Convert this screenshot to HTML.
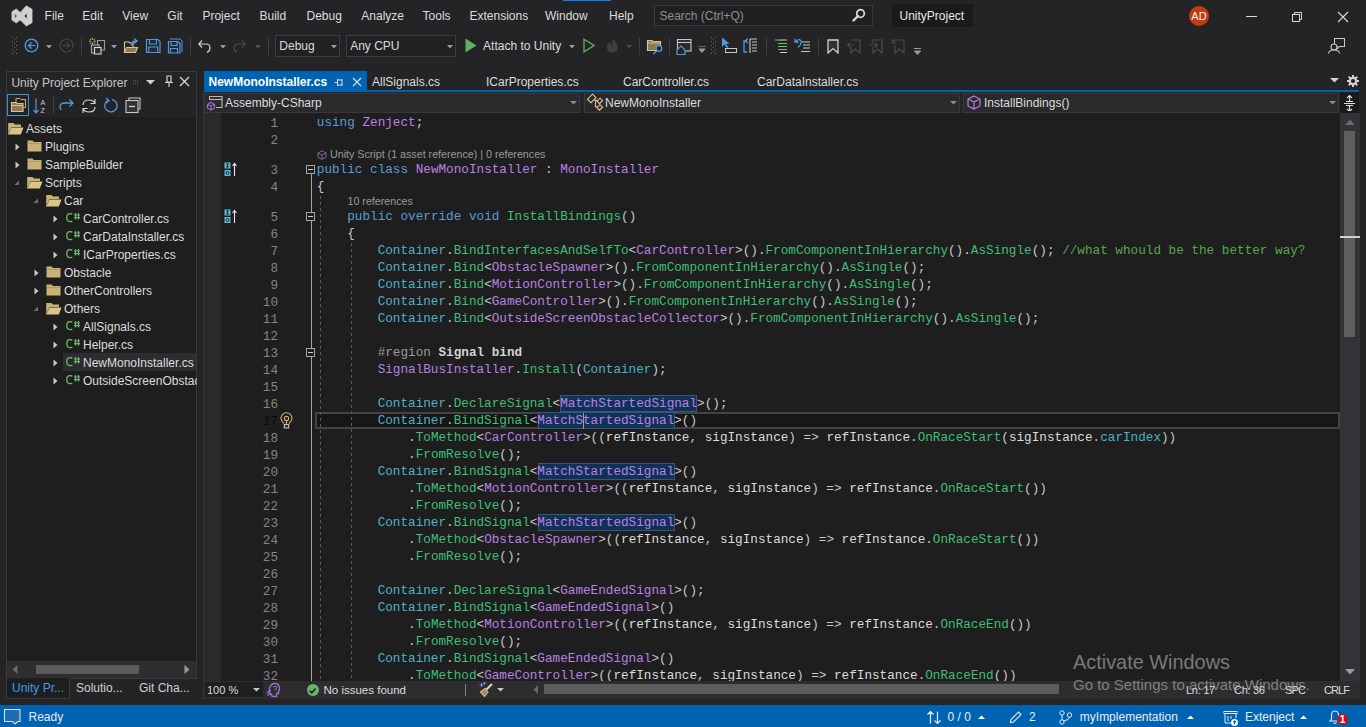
<!DOCTYPE html>
<html><head><meta charset="utf-8"><title>VS</title>
<style>
html,body{margin:0;padding:0;}
body{width:1366px;height:727px;overflow:hidden;position:relative;background:#242426;font-family:"Liberation Sans",sans-serif;}
body>div,body>svg{position:absolute;}
.ln{position:absolute;left:240px;width:38px;text-align:right;font-family:"Liberation Mono",monospace;font-size:12.68px;height:17px;line-height:17px;padding-top:1px;box-sizing:border-box;}
.code{position:absolute;left:316.8px;font-family:"Liberation Mono",monospace;font-size:12.68px;height:17px;line-height:17px;white-space:pre;}
</style></head><body>
<svg style="left:11px;top:5px;" width="22" height="22" viewBox="0 0 22 22"><path d="M5.2 3.9 L9.3 7.4 L15.3 0.85 L21.1 4.2 L21.1 17.7 L15.3 21.1 L9.3 15.1 L5.2 18 L0.85 15 L0.85 6.8 Z M3.9 8.8 L6.2 11 L3.9 13.2 Z M16 8.3 L13 11 L16 13.7 Z" fill="#d0d0d0" fill-rule="evenodd" stroke="#d0d0d0" stroke-width="0.6" stroke-linejoin="round"/></svg><div style="left:44.6px;top:6px;height:20px;line-height:20px;white-space:pre;font-size:12px;color:#dcdcdc;">File</div><div style="left:82.3px;top:6px;height:20px;line-height:20px;white-space:pre;font-size:12px;color:#dcdcdc;">Edit</div><div style="left:122.3px;top:6px;height:20px;line-height:20px;white-space:pre;font-size:12px;color:#dcdcdc;">View</div><div style="left:167.3px;top:6px;height:20px;line-height:20px;white-space:pre;font-size:12px;color:#dcdcdc;">Git</div><div style="left:202.4px;top:6px;height:20px;line-height:20px;white-space:pre;font-size:12px;color:#dcdcdc;">Project</div><div style="left:259.5px;top:6px;height:20px;line-height:20px;white-space:pre;font-size:12px;color:#dcdcdc;">Build</div><div style="left:306.5px;top:6px;height:20px;line-height:20px;white-space:pre;font-size:12px;color:#dcdcdc;">Debug</div><div style="left:361.3px;top:6px;height:20px;line-height:20px;white-space:pre;font-size:12px;color:#dcdcdc;">Analyze</div><div style="left:422.6px;top:6px;height:20px;line-height:20px;white-space:pre;font-size:12px;color:#dcdcdc;">Tools</div><div style="left:469.5px;top:6px;height:20px;line-height:20px;white-space:pre;font-size:12px;color:#dcdcdc;">Extensions</div><div style="left:545px;top:6px;height:20px;line-height:20px;white-space:pre;font-size:12px;color:#dcdcdc;">Window</div><div style="left:609px;top:6px;height:20px;line-height:20px;white-space:pre;font-size:12px;color:#dcdcdc;">Help</div><div style="left:563px;top:0px;width:48px;height:1px;background:#0a84f0;"></div><div style="left:654px;top:5px;width:219px;height:21px;background:#202022;border:1px solid #3a3a3c;box-sizing:border-box;"></div><div style="left:659.5px;top:7px;height:19px;line-height:19px;white-space:pre;font-size:12px;color:#8f8f8f;">Search (Ctrl+Q)</div><svg style="left:852px;top:8px;" width="14" height="14" viewBox="0 0 14 14"><circle cx="8.5" cy="5.5" r="3.8" fill="none" stroke="#d8d8d8" stroke-width="1.8"/><path d="M6 8 L1.5 12.5" stroke="#d8d8d8" stroke-width="2.4" stroke-linecap="round"/></svg><div style="left:892px;top:4px;width:81px;height:23px;background:#1a1a1a;"></div><div style="left:899.5px;top:6px;height:21px;line-height:21px;white-space:pre;font-size:12px;color:#e8e8e8;">UnityProject</div><div style="left:1189px;top:6px;width:20px;height:20px;border-radius:50%;background:#c13c0f;color:#f0f0f0;font-size:11px;line-height:20px;text-align:center;">AD</div><div style="left:1246px;top:16px;width:11px;height:1px;background:#d8d8d8;"></div><svg style="left:1291px;top:11px;" width="12" height="12" viewBox="0 0 12 12"><rect x="1.5" y="3.5" width="7" height="7" fill="none" stroke="#d8d8d8"/><path d="M3.5 3.5 V1.5 H10.5 V8.5 H8.5" fill="none" stroke="#d8d8d8"/></svg><svg style="left:1337px;top:11px;" width="12" height="12" viewBox="0 0 12 12"><path d="M1 1 L11 11 M11 1 L1 11" stroke="#d8d8d8" stroke-width="1.1"/></svg><svg style="left:12px;top:37px;" width="5" height="17" viewBox="0 0 5 17"><rect x="0" y="0" width="1" height="1" fill="#6a6a6a"/><rect x="4" y="0" width="1" height="1" fill="#6a6a6a"/><rect x="2" y="2" width="1" height="1" fill="#6a6a6a"/><rect x="0" y="4" width="1" height="1" fill="#6a6a6a"/><rect x="4" y="4" width="1" height="1" fill="#6a6a6a"/><rect x="2" y="6" width="1" height="1" fill="#6a6a6a"/><rect x="0" y="8" width="1" height="1" fill="#6a6a6a"/><rect x="4" y="8" width="1" height="1" fill="#6a6a6a"/><rect x="2" y="10" width="1" height="1" fill="#6a6a6a"/><rect x="0" y="12" width="1" height="1" fill="#6a6a6a"/><rect x="4" y="12" width="1" height="1" fill="#6a6a6a"/><rect x="2" y="14" width="1" height="1" fill="#6a6a6a"/><rect x="0" y="16" width="1" height="1" fill="#6a6a6a"/><rect x="4" y="16" width="1" height="1" fill="#6a6a6a"/></svg><svg style="left:24px;top:38px;" width="15" height="15" viewBox="0 0 15 15"><circle cx="7.5" cy="7.5" r="6.3" fill="#262a30" stroke="#4d9ae0" stroke-width="1.3"/><path d="M11 7.5 H4.5 M7.5 4.5 L4.5 7.5 L7.5 10.5" fill="none" stroke="#4d9ae0" stroke-width="1.2"/></svg><svg style="left:46px;top:45px;" width="6" height="4" viewBox="0 0 6 4"><path d="M0 0 H6 L3 3.5 Z" fill="#9a9a9a"/></svg><svg style="left:59px;top:38px;" width="15" height="15" viewBox="0 0 15 15"><circle cx="7.5" cy="7.5" r="6.5" fill="none" stroke="#454545" stroke-width="1.2"/><path d="M4 7.5 H10.5 M7.5 4.5 L10.5 7.5 L7.5 10.5" fill="none" stroke="#454545" stroke-width="1.2"/></svg><div style="left:81px;top:38px;width:1px;height:17px;background:#3f3f42;"></div><svg style="left:88px;top:37px;" width="18" height="18" viewBox="0 0 18 18"><path d="M4.4 0.8 V7.6 M1 4.2 H7.8 M2 1.8 L6.8 6.6 M6.8 1.8 L2 6.6" stroke="#e8c86e" stroke-width="1"/><circle cx="4.4" cy="4.2" r="1.6" fill="#242426"/><rect x="9.5" y="3.5" width="7" height="9.5" fill="none" stroke="#9a9a9a" stroke-width="1.1"/><rect x="3.5" y="8" width="7.5" height="8" fill="#2a2a2c" stroke="#a8a8a8" stroke-width="1.1"/><rect x="6.5" y="10.5" width="6.5" height="6.5" fill="#2e2e30" stroke="#d8d8d8" stroke-width="1.1"/></svg><svg style="left:111px;top:45px;" width="6" height="4" viewBox="0 0 6 4"><path d="M0 0 H6 L3 3.5 Z" fill="#9a9a9a"/></svg><svg style="left:123px;top:37px;" width="16" height="17" viewBox="0 0 16 17"><path d="M1.5 5 H6 L7 6 H10 V15.5 H1.5 Z" fill="none" stroke="#dcc488" stroke-width="1.1"/><path d="M1.5 15.5 L3.5 10.5 H14.5 L12.5 15.5 Z" fill="#8a7b55" stroke="#dcc488" stroke-width="1.1"/><path d="M8.5 8.5 Q8.5 4 13 4 M11 1.5 L14 4 L11 6.5" fill="none" stroke="#4d9ae0" stroke-width="1.5"/></svg><svg style="left:145px;top:38px;" width="16" height="16" viewBox="0 0 16 16"><path d="M1.5 1.5 H13 L15 3.5 V14.5 H1.5 Z" fill="#262a30" stroke="#4d9ae0" stroke-width="1.2"/><path d="M4.5 1.5 V6 H11.5 V1.5 M3.8 14.5 V9 H12.7 V14.5" fill="none" stroke="#4d9ae0" stroke-width="1.1"/></svg><svg style="left:167px;top:38px;" width="16" height="16" viewBox="0 0 16 16"><path d="M3 1 H13 L15 3 V14" fill="none" stroke="#4d9ae0" stroke-width="1"/><path d="M1.5 3.5 H11 L13 5.5 V15 H1.5 Z" fill="#262a30" stroke="#4d9ae0" stroke-width="1.2"/><path d="M4 3.5 V7.5 H10 V3.5 M3.5 15 V10.5 H10.5 V15" fill="none" stroke="#4d9ae0" stroke-width="1.1"/></svg><div style="left:190px;top:38px;width:1px;height:17px;background:#3f3f42;"></div><svg style="left:198px;top:38px;" width="13" height="15" viewBox="0 0 13 15"><path d="M1 6 H8 Q12 6 12 10 Q12 13 9 14.5 M4 2.5 L0.8 6 L4 9.5" fill="none" stroke="#d0d0d0" stroke-width="1.2"/></svg><svg style="left:220px;top:45px;" width="6" height="4" viewBox="0 0 6 4"><path d="M0 0 H6 L3 3.5 Z" fill="#9a9a9a"/></svg><svg style="left:233px;top:38px;" width="13" height="15" viewBox="0 0 13 15"><path d="M12 6 H5 Q1 6 1 10 Q1 13 4 14.5 M9 2.5 L12.2 6 L9 9.5" fill="none" stroke="#4a4a4a" stroke-width="1.2"/></svg><svg style="left:255px;top:45px;" width="6" height="4" viewBox="0 0 6 4"><path d="M0 0 H6 L3 3.5 Z" fill="#555"/></svg><div style="left:268px;top:38px;width:1px;height:17px;background:#3f3f42;"></div><div style="left:275px;top:35px;width:65px;height:22px;border:1px solid #3c3c3e;box-sizing:border-box;background:#212123;"></div><div style="left:279.3px;top:36px;height:20px;line-height:20px;white-space:pre;font-size:12px;color:#dcdcdc;">Debug</div><svg style="left:331px;top:45px;" width="6" height="4" viewBox="0 0 6 4"><path d="M0 0 H6 L3 3.5 Z" fill="#9a9a9a"/></svg><div style="left:346px;top:35px;width:110px;height:22px;border:1px solid #3c3c3e;box-sizing:border-box;background:#212123;"></div><div style="left:350.2px;top:36px;height:20px;line-height:20px;white-space:pre;font-size:12px;color:#dcdcdc;">Any CPU</div><svg style="left:447px;top:45px;" width="6" height="4" viewBox="0 0 6 4"><path d="M0 0 H6 L3 3.5 Z" fill="#9a9a9a"/></svg><svg style="left:465px;top:38px;" width="12" height="15" viewBox="0 0 12 15"><path d="M0.5 0.5 L11.5 7.5 L0.5 14.5 Z" fill="#5fb25f"/></svg><div style="left:483.1px;top:36px;height:20px;line-height:20px;white-space:pre;font-size:12px;color:#dcdcdc;">Attach to Unity</div><svg style="left:569px;top:45px;" width="6" height="4" viewBox="0 0 6 4"><path d="M0 0 H6 L3 3.5 Z" fill="#9a9a9a"/></svg><svg style="left:583px;top:38px;" width="12" height="15" viewBox="0 0 12 15"><path d="M1 1.2 L11 7.5 L1 13.8 Z" fill="none" stroke="#5fb25f" stroke-width="1.3"/></svg><svg style="left:605px;top:38px;" width="15" height="15" viewBox="0 0 15 15"><path d="M7 0.5 Q12 4 13 9 Q13 14.5 7.5 14.5 Q2 14.5 2 9.5 Q2 6 5 4 Q5 7 7 8 Q8 4 7 0.5 Z" fill="#3e3e3e"/></svg><svg style="left:626px;top:45px;" width="6" height="4" viewBox="0 0 6 4"><path d="M0 0 H6 L3 3.5 Z" fill="#4a4a4a"/></svg><div style="left:639px;top:38px;width:1px;height:17px;background:#3f3f42;"></div><svg style="left:646px;top:39px;" width="17" height="17" viewBox="0 0 17 17"><path d="M1.5 1.5 H6 L7 2.5 H14.5 V11.5 H1.5 Z" fill="#8a7b55" stroke="#dcc488" stroke-width="1.1"/><path d="M1.5 4 H14.5" stroke="#dcc488" stroke-width="1"/><circle cx="13" cy="9.5" r="2.8" fill="#242426" stroke="#4d9ae0" stroke-width="1.3"/><path d="M11 11.5 L7.5 15" stroke="#4d9ae0" stroke-width="1.4"/></svg><div style="left:669px;top:38px;width:1px;height:17px;background:#3f3f42;"></div><svg style="left:676px;top:39px;" width="17" height="17" viewBox="0 0 17 17"><rect x="1.5" y="0.5" width="13.5" height="11.5" fill="#2a2a2c" stroke="#c8c8c8" stroke-width="1.1"/><path d="M1.5 3.5 H15" stroke="#c8c8c8" stroke-width="1.1"/><path d="M1 11 L5 7 L9 11 V15.5 H1 Z" fill="#242426" stroke="#4d9ae0" stroke-width="1.2"/></svg><svg style="left:698px;top:46px;" width="8" height="8" viewBox="0 0 8 8"><path d="M0 0 H8 M1 3 H7 L4 6.5 Z" stroke="#9a9a9a" fill="#9a9a9a"/></svg><svg style="left:711px;top:37px;" width="5" height="17" viewBox="0 0 5 17"><rect x="0" y="0" width="1" height="1" fill="#6a6a6a"/><rect x="4" y="0" width="1" height="1" fill="#6a6a6a"/><rect x="2" y="2" width="1" height="1" fill="#6a6a6a"/><rect x="0" y="4" width="1" height="1" fill="#6a6a6a"/><rect x="4" y="4" width="1" height="1" fill="#6a6a6a"/><rect x="2" y="6" width="1" height="1" fill="#6a6a6a"/><rect x="0" y="8" width="1" height="1" fill="#6a6a6a"/><rect x="4" y="8" width="1" height="1" fill="#6a6a6a"/><rect x="2" y="10" width="1" height="1" fill="#6a6a6a"/><rect x="0" y="12" width="1" height="1" fill="#6a6a6a"/><rect x="4" y="12" width="1" height="1" fill="#6a6a6a"/><rect x="2" y="14" width="1" height="1" fill="#6a6a6a"/><rect x="0" y="16" width="1" height="1" fill="#6a6a6a"/><rect x="4" y="16" width="1" height="1" fill="#6a6a6a"/></svg><svg style="left:721px;top:37px;" width="17" height="17" viewBox="0 0 17 17"><path d="M1 0.5 L1 10 L3.5 7.5 L6 11 L7.5 10 L5 7 L8.5 6.5 Z" fill="#4d9ae0"/><rect x="4.5" y="11.5" width="11" height="4" fill="none" stroke="#c8c8c8"/></svg><svg style="left:743px;top:38px;" width="15" height="16" viewBox="0 0 15 16"><path d="M4 3 H1 V14 H4 M2 3 L5 0.5 M2 3 L5 5" fill="none" stroke="#4d9ae0" stroke-width="1.3"/><path d="M7 1 H14 M7 1 V15 M9 4 H14 M9 7 H14 M9 10 H14 M9 13 H14" stroke="#c8c8c8" stroke-width="1.1"/></svg><div style="left:766px;top:38px;width:1px;height:17px;background:#3f3f42;"></div><svg style="left:775px;top:39px;" width="13" height="14" viewBox="0 0 13 14"><path d="M0 1 H4 M3 4.5 H12 M3 7.5 H12 M3 10.5 H12" stroke="#6cc26c" stroke-width="1.1"/><path d="M4 1 H12 M5 13.5 H12" stroke="#c8c8c8" stroke-width="1.1"/></svg><svg style="left:794px;top:38px;" width="17" height="16" viewBox="0 0 17 16"><path d="M2 3 Q6 0 7.5 3.5 Q7 7 4 9.5 M1 0.5 V4 H4.5" fill="none" stroke="#4d9ae0" stroke-width="1.3"/><path d="M8 4 H16 M9 7 H16 M9 10 H16 M7 13.5 H16" stroke="#c8c8c8" stroke-width="1.1"/></svg><div style="left:818px;top:38px;width:1px;height:17px;background:#3f3f42;"></div><svg style="left:827px;top:39px;" width="12" height="15" viewBox="0 0 12 15"><path d="M1 1 H11 V14 L6 9.5 L1 14 Z" fill="#333" stroke="#d0d0d0" stroke-width="1.3"/></svg><svg style="left:847px;top:39px;" width="15" height="15" viewBox="0 0 15 15"><path d="M4 1 H13 V14 L8.5 10 L4 14 V8 M0.5 6 H7 M3 3.5 L0.5 6 L3 8.5" fill="none" stroke="#4a4a4a" stroke-width="1.2"/></svg><svg style="left:869px;top:39px;" width="15" height="15" viewBox="0 0 15 15"><path d="M4 4 V1 H13 V14 L8.5 10 L4 14 V8 M0.5 6 H8 M6 3.5 L8.5 6 L6 8.5" fill="none" stroke="#4a4a4a" stroke-width="1.2"/></svg><svg style="left:891px;top:39px;" width="15" height="15" viewBox="0 0 15 15"><path d="M6 1 H13 V14 L8.5 10 L4 14 V6 M0.5 0.5 L4.5 4.5 M4.5 0.5 L0.5 4.5" fill="none" stroke="#4a4a4a" stroke-width="1.2"/></svg><svg style="left:914px;top:48px;" width="7" height="7" viewBox="0 0 7 7"><path d="M0 0.5 H7 M0.5 3 H6.5 L3.5 6.5 Z" stroke="#9a9a9a" fill="#9a9a9a"/></svg><svg style="left:1328px;top:38px;" width="18" height="16" viewBox="0 0 18 16"><rect x="6.5" y="0.5" width="10" height="8" fill="none" stroke="#c8c8c8"/><path d="M9 8.5 L9 11 L12 8.5" fill="#222" stroke="#c8c8c8"/><circle cx="6" cy="9" r="3" fill="#222" stroke="#c8c8c8" stroke-width="1.1"/><path d="M0.5 15.5 Q1 12 6 12 Q11 12 11.5 15.5" fill="#222" stroke="#c8c8c8" stroke-width="1.1"/></svg><div style="left:6px;top:71px;width:191px;height:608px;border:1px solid #3a3a3d;box-sizing:border-box;background:#242426;"></div><div style="left:11.4px;top:73px;height:20px;line-height:20px;white-space:pre;font-size:12px;color:#c4c4c4;">Unity Project Explorer</div><svg style="left:133px;top:80px;" width="6" height="6" viewBox="0 0 6 6"><rect x="0" y="0" width="1" height="1" fill="#555"/><rect x="2" y="0" width="1" height="1" fill="#555"/><rect x="4" y="0" width="1" height="1" fill="#555"/><rect x="0" y="2" width="1" height="1" fill="#555"/><rect x="2" y="2" width="1" height="1" fill="#555"/><rect x="4" y="2" width="1" height="1" fill="#555"/><rect x="0" y="4" width="1" height="1" fill="#555"/><rect x="2" y="4" width="1" height="1" fill="#555"/><rect x="4" y="4" width="1" height="1" fill="#555"/></svg><svg style="left:146px;top:80px;" width="9" height="5" viewBox="0 0 9 5"><path d="M0 0 H9 L4.5 4.5 Z" fill="#d0d0d0"/></svg><svg style="left:164px;top:75px;" width="10" height="13" viewBox="0 0 10 13"><path d="M2.5 1 H7.5 M3 1 V7 H7 V1 M1 7.5 H9 M5 7.5 V12" fill="none" stroke="#d0d0d0" stroke-width="1.2"/></svg><svg style="left:179px;top:76px;" width="11" height="11" viewBox="0 0 11 11"><path d="M1 1 L10 10 M10 1 L1 10" stroke="#d0d0d0" stroke-width="1.4"/></svg><div style="left:7px;top:94px;width:22px;height:22px;border:1px solid #3f8fd6;box-sizing:border-box;"></div><svg style="left:10px;top:97px;" width="17" height="16" viewBox="0 0 17 16"><path d="M6 5 V1.5 H10 L11 2.5 H15.5 V10.5 H13" fill="none" stroke="#c9b275" stroke-width="1"/><path d="M1.5 5.5 H6 L7 6.5 H13 V14.5 H1.5 Z" fill="#8a7b55" stroke="#dcc488" stroke-width="1.1"/><path d="M1.5 8.5 H13" stroke="#dcc488" stroke-width="1"/></svg><svg style="left:33px;top:98px;" width="14" height="16" viewBox="0 0 14 16"><path d="M3 0.5 V14.5 M0.5 12 L3 14.8 L5.5 12" fill="none" stroke="#4d9ae0" stroke-width="1.2"/><text x="7.5" y="6.5" font-size="7" fill="#d0d0d0" font-family="Liberation Sans">A</text><text x="7.5" y="14.5" font-size="7" fill="#d0d0d0" font-family="Liberation Sans">Z</text></svg><div style="left:53px;top:96px;width:1px;height:18px;background:#3f3f42;"></div><svg style="left:59px;top:98px;" width="15" height="12" viewBox="0 0 15 12"><path d="M13.5 5 H6 Q1 5 1 9 Q1 11 2.5 12 M10.5 1.5 L14 5 L10.5 8.5" fill="none" stroke="#4d9ae0" stroke-width="1.3"/></svg><svg style="left:81px;top:98px;" width="16" height="16" viewBox="0 0 16 16"><path d="M2 7 Q2 2 8 2 Q12 2 14 5 M14 1 V5.5 H9.5 M14 9 Q14 14 8 14 Q4 14 2 11 M2 15 V10.5 H6.5" fill="none" stroke="#d0d0d0" stroke-width="1.2"/></svg><svg style="left:103px;top:97px;" width="16" height="17" viewBox="0 0 16 17"><path d="M4.5 3.5 A6.2 6.2 0 1 0 9 2.6" fill="none" stroke="#4d9ae0" stroke-width="1.3"/><path d="M3 1 L6 3.8 L3 6" fill="none" stroke="#4d9ae0" stroke-width="1.3"/></svg><svg style="left:125px;top:97px;" width="16" height="17" viewBox="0 0 16 17"><path d="M4 3.5 V1 H15 V12 H13" fill="none" stroke="#c8c8c8" stroke-width="1.1"/><rect x="1" y="3.5" width="12" height="12" fill="#333" stroke="#c8c8c8" stroke-width="1.1"/><path d="M4 9.5 H10" stroke="#d8d8d8" stroke-width="1.3"/></svg><div style="left:7px;top:117px;width:189px;height:544px;background:#1e1e1e;"></div><svg style="left:8px;top:122px;" width="16" height="13" viewBox="0 0 16 13"><path d="M0.5 1 H5.5 L7 2.5 H13 V5 H3.5 L0.5 12 Z" fill="#c9b275"/><path d="M0.5 12.5 L3.5 5.5 H15.5 L12.8 12.5 Z" fill="#dcc488"/><path d="M0.5 1 V12.5" stroke="#a89160"/></svg><div style="left:26px;top:120px;height:18px;line-height:18px;white-space:pre;font-size:12px;color:#dcdcdc;">Assets</div><svg style="left:15px;top:143px;" width="5" height="8" viewBox="0 0 5 8"><path d="M0.5 0.5 L4.5 4 L0.5 7.5 Z" fill="#c8c8c8"/></svg><svg style="left:27px;top:140px;" width="15" height="12" viewBox="0 0 15 12"><path d="M0.5 0.5 H5.5 L7 2 H14.5 V11.5 H0.5 Z" fill="#c9b275"/><path d="M0.5 3.5 H14.5" stroke="#a89160" stroke-width="0.8"/></svg><div style="left:45px;top:138px;height:18px;line-height:18px;white-space:pre;font-size:12px;color:#dcdcdc;">Plugins</div><svg style="left:15px;top:161px;" width="5" height="8" viewBox="0 0 5 8"><path d="M0.5 0.5 L4.5 4 L0.5 7.5 Z" fill="#c8c8c8"/></svg><svg style="left:27px;top:158px;" width="15" height="12" viewBox="0 0 15 12"><path d="M0.5 0.5 H5.5 L7 2 H14.5 V11.5 H0.5 Z" fill="#c9b275"/><path d="M0.5 3.5 H14.5" stroke="#a89160" stroke-width="0.8"/></svg><div style="left:45px;top:156px;height:18px;line-height:18px;white-space:pre;font-size:12px;color:#dcdcdc;">SampleBuilder</div><svg style="left:13.5px;top:180px;" width="6" height="6" viewBox="0 0 6 6"><path d="M5 0.5 V5 H0.5 Z" fill="#707070"/></svg><svg style="left:27px;top:176px;" width="16" height="13" viewBox="0 0 16 13"><path d="M0.5 1 H5.5 L7 2.5 H13 V5 H3.5 L0.5 12 Z" fill="#c9b275"/><path d="M0.5 12.5 L3.5 5.5 H15.5 L12.8 12.5 Z" fill="#dcc488"/><path d="M0.5 1 V12.5" stroke="#a89160"/></svg><div style="left:45px;top:174px;height:18px;line-height:18px;white-space:pre;font-size:12px;color:#dcdcdc;">Scripts</div><svg style="left:32.5px;top:198px;" width="6" height="6" viewBox="0 0 6 6"><path d="M5 0.5 V5 H0.5 Z" fill="#707070"/></svg><svg style="left:46px;top:194px;" width="16" height="13" viewBox="0 0 16 13"><path d="M0.5 1 H5.5 L7 2.5 H13 V5 H3.5 L0.5 12 Z" fill="#c9b275"/><path d="M0.5 12.5 L3.5 5.5 H15.5 L12.8 12.5 Z" fill="#dcc488"/><path d="M0.5 1 V12.5" stroke="#a89160"/></svg><div style="left:64px;top:192px;height:18px;line-height:18px;white-space:pre;font-size:12px;color:#dcdcdc;">Car</div><svg style="left:53px;top:215px;" width="5" height="8" viewBox="0 0 5 8"><path d="M0.5 0.5 L4.5 4 L0.5 7.5 Z" fill="#c8c8c8"/></svg><svg style="left:65.5px;top:213px;" width="16" height="10" viewBox="0 0 16 10"><path d="M6.3 1.3 Q5.5 0.6 4 0.6 Q0.8 0.6 0.8 4.6 Q0.8 8.6 4 8.6 Q5.5 8.6 6.3 7.9" fill="none" stroke="#6cb86c" stroke-width="1.3"/><path d="M9.5 0 V6.5 M12.5 0 V6.5 M8 2 H14 M8 4.6 H14" stroke="#6cb86c" stroke-width="1.2"/></svg><div style="left:83px;top:210px;height:18px;line-height:18px;white-space:pre;font-size:12px;color:#dcdcdc;">CarController.cs</div><svg style="left:53px;top:233px;" width="5" height="8" viewBox="0 0 5 8"><path d="M0.5 0.5 L4.5 4 L0.5 7.5 Z" fill="#c8c8c8"/></svg><svg style="left:65.5px;top:231px;" width="16" height="10" viewBox="0 0 16 10"><path d="M6.3 1.3 Q5.5 0.6 4 0.6 Q0.8 0.6 0.8 4.6 Q0.8 8.6 4 8.6 Q5.5 8.6 6.3 7.9" fill="none" stroke="#6cb86c" stroke-width="1.3"/><path d="M9.5 0 V6.5 M12.5 0 V6.5 M8 2 H14 M8 4.6 H14" stroke="#6cb86c" stroke-width="1.2"/></svg><div style="left:83px;top:228px;height:18px;line-height:18px;white-space:pre;font-size:12px;color:#dcdcdc;">CarDataInstaller.cs</div><svg style="left:53px;top:251px;" width="5" height="8" viewBox="0 0 5 8"><path d="M0.5 0.5 L4.5 4 L0.5 7.5 Z" fill="#c8c8c8"/></svg><svg style="left:65.5px;top:249px;" width="16" height="10" viewBox="0 0 16 10"><path d="M6.3 1.3 Q5.5 0.6 4 0.6 Q0.8 0.6 0.8 4.6 Q0.8 8.6 4 8.6 Q5.5 8.6 6.3 7.9" fill="none" stroke="#6cb86c" stroke-width="1.3"/><path d="M9.5 0 V6.5 M12.5 0 V6.5 M8 2 H14 M8 4.6 H14" stroke="#6cb86c" stroke-width="1.2"/></svg><div style="left:83px;top:246px;height:18px;line-height:18px;white-space:pre;font-size:12px;color:#dcdcdc;">ICarProperties.cs</div><svg style="left:34px;top:269px;" width="5" height="8" viewBox="0 0 5 8"><path d="M0.5 0.5 L4.5 4 L0.5 7.5 Z" fill="#c8c8c8"/></svg><svg style="left:46px;top:266px;" width="15" height="12" viewBox="0 0 15 12"><path d="M0.5 0.5 H5.5 L7 2 H14.5 V11.5 H0.5 Z" fill="#c9b275"/><path d="M0.5 3.5 H14.5" stroke="#a89160" stroke-width="0.8"/></svg><div style="left:64px;top:264px;height:18px;line-height:18px;white-space:pre;font-size:12px;color:#dcdcdc;">Obstacle</div><svg style="left:34px;top:287px;" width="5" height="8" viewBox="0 0 5 8"><path d="M0.5 0.5 L4.5 4 L0.5 7.5 Z" fill="#c8c8c8"/></svg><svg style="left:46px;top:284px;" width="15" height="12" viewBox="0 0 15 12"><path d="M0.5 0.5 H5.5 L7 2 H14.5 V11.5 H0.5 Z" fill="#c9b275"/><path d="M0.5 3.5 H14.5" stroke="#a89160" stroke-width="0.8"/></svg><div style="left:64px;top:282px;height:18px;line-height:18px;white-space:pre;font-size:12px;color:#dcdcdc;">OtherControllers</div><svg style="left:32.5px;top:306px;" width="6" height="6" viewBox="0 0 6 6"><path d="M5 0.5 V5 H0.5 Z" fill="#707070"/></svg><svg style="left:46px;top:302px;" width="16" height="13" viewBox="0 0 16 13"><path d="M0.5 1 H5.5 L7 2.5 H13 V5 H3.5 L0.5 12 Z" fill="#c9b275"/><path d="M0.5 12.5 L3.5 5.5 H15.5 L12.8 12.5 Z" fill="#dcc488"/><path d="M0.5 1 V12.5" stroke="#a89160"/></svg><div style="left:64px;top:300px;height:18px;line-height:18px;white-space:pre;font-size:12px;color:#dcdcdc;">Others</div><svg style="left:53px;top:323px;" width="5" height="8" viewBox="0 0 5 8"><path d="M0.5 0.5 L4.5 4 L0.5 7.5 Z" fill="#c8c8c8"/></svg><svg style="left:65.5px;top:321px;" width="16" height="10" viewBox="0 0 16 10"><path d="M6.3 1.3 Q5.5 0.6 4 0.6 Q0.8 0.6 0.8 4.6 Q0.8 8.6 4 8.6 Q5.5 8.6 6.3 7.9" fill="none" stroke="#6cb86c" stroke-width="1.3"/><path d="M9.5 0 V6.5 M12.5 0 V6.5 M8 2 H14 M8 4.6 H14" stroke="#6cb86c" stroke-width="1.2"/></svg><div style="left:83px;top:318px;height:18px;line-height:18px;white-space:pre;font-size:12px;color:#dcdcdc;">AllSignals.cs</div><svg style="left:53px;top:341px;" width="5" height="8" viewBox="0 0 5 8"><path d="M0.5 0.5 L4.5 4 L0.5 7.5 Z" fill="#c8c8c8"/></svg><svg style="left:65.5px;top:339px;" width="16" height="10" viewBox="0 0 16 10"><path d="M6.3 1.3 Q5.5 0.6 4 0.6 Q0.8 0.6 0.8 4.6 Q0.8 8.6 4 8.6 Q5.5 8.6 6.3 7.9" fill="none" stroke="#6cb86c" stroke-width="1.3"/><path d="M9.5 0 V6.5 M12.5 0 V6.5 M8 2 H14 M8 4.6 H14" stroke="#6cb86c" stroke-width="1.2"/></svg><div style="left:83px;top:336px;height:18px;line-height:18px;white-space:pre;font-size:12px;color:#dcdcdc;">Helper.cs</div><div style="left:63px;top:353px;width:133px;height:18px;background:#2d2d30;"></div><svg style="left:53px;top:359px;" width="5" height="8" viewBox="0 0 5 8"><path d="M0.5 0.5 L4.5 4 L0.5 7.5 Z" fill="#c8c8c8"/></svg><svg style="left:65.5px;top:357px;" width="16" height="10" viewBox="0 0 16 10"><path d="M6.3 1.3 Q5.5 0.6 4 0.6 Q0.8 0.6 0.8 4.6 Q0.8 8.6 4 8.6 Q5.5 8.6 6.3 7.9" fill="none" stroke="#6cb86c" stroke-width="1.3"/><path d="M9.5 0 V6.5 M12.5 0 V6.5 M8 2 H14 M8 4.6 H14" stroke="#6cb86c" stroke-width="1.2"/></svg><div style="left:83px;top:354px;height:18px;line-height:18px;white-space:pre;font-size:12px;color:#dcdcdc;">NewMonoInstaller.cs</div><svg style="left:53px;top:377px;" width="5" height="8" viewBox="0 0 5 8"><path d="M0.5 0.5 L4.5 4 L0.5 7.5 Z" fill="#c8c8c8"/></svg><svg style="left:65.5px;top:375px;" width="16" height="10" viewBox="0 0 16 10"><path d="M6.3 1.3 Q5.5 0.6 4 0.6 Q0.8 0.6 0.8 4.6 Q0.8 8.6 4 8.6 Q5.5 8.6 6.3 7.9" fill="none" stroke="#6cb86c" stroke-width="1.3"/><path d="M9.5 0 V6.5 M12.5 0 V6.5 M8 2 H14 M8 4.6 H14" stroke="#6cb86c" stroke-width="1.2"/></svg><div style="left:83px;top:372px;height:18px;line-height:18px;white-space:pre;font-size:12px;color:#dcdcdc;">OutsideScreenObstacleCollector.cs</div><div style="left:197px;top:117px;width:7px;height:544px;background:#242426;"></div><div style="left:7px;top:661px;width:189px;height:17px;background:#2e2e30;"></div><svg style="left:12px;top:665px;" width="6" height="9" viewBox="0 0 6 9"><path d="M5.5 0 L0.5 4.5 L5.5 9 Z" fill="#6a6a6a"/></svg><div style="left:36px;top:665px;width:103px;height:9px;background:#5c5c5c;"></div><svg style="left:184px;top:665px;" width="6" height="9" viewBox="0 0 6 9"><path d="M0.5 0 L5.5 4.5 L0.5 9 Z" fill="#9a9a9a"/></svg><div style="left:6px;top:678px;width:64px;height:21px;background:#1e1e1e;border:1px solid #38383b;box-sizing:border-box;border-top:none;"></div><div style="left:12px;top:679px;height:19px;line-height:19px;white-space:pre;font-size:12px;color:#3d9be9;">Unity Pr...</div><div style="left:76px;top:679px;height:19px;line-height:19px;white-space:pre;font-size:12px;color:#d0d0d0;">Solutio...</div><div style="left:139px;top:679px;height:19px;line-height:19px;white-space:pre;font-size:12px;color:#d0d0d0;">Git Cha...</div><div style="left:204px;top:71px;width:163px;height:20px;background:#0063b1;"></div><div style="left:208.5px;top:73px;height:19px;line-height:19px;white-space:pre;font-size:12px;font-weight:bold;color:#ffffff;">NewMonoInstaller.cs</div><svg style="left:334px;top:78px;" width="10" height="9" viewBox="0 0 10 9"><path d="M0.5 4.5 H3.5 M3.5 1 V8 M3.5 2 H8 M3.5 7 H8 M8 1 V8" fill="none" stroke="#e0e0e0" stroke-width="1"/></svg><svg style="left:352px;top:77px;" width="10" height="10" viewBox="0 0 10 10"><path d="M1 1 L9 9 M9 1 L1 9" stroke="#d8d8d8" stroke-width="1.3"/></svg><div style="left:372px;top:73px;height:19px;line-height:19px;white-space:pre;font-size:12px;color:#dcdcdc;">AllSignals.cs</div><div style="left:486px;top:73px;height:19px;line-height:19px;white-space:pre;font-size:12px;color:#dcdcdc;">ICarProperties.cs</div><div style="left:623px;top:73px;height:19px;line-height:19px;white-space:pre;font-size:12px;color:#dcdcdc;">CarController.cs</div><div style="left:757px;top:73px;height:19px;line-height:19px;white-space:pre;font-size:12px;color:#dcdcdc;">CarDataInstaller.cs</div><svg style="left:1330px;top:78px;" width="9" height="5" viewBox="0 0 9 5"><path d="M0 0 H9 L4.5 4.5 Z" fill="#d0d0d0"/></svg><svg style="left:1347px;top:75px;" width="12" height="12" viewBox="0 0 12 12"><circle cx="6" cy="6" r="3.2" fill="none" stroke="#d0d0d0" stroke-width="2.2"/><rect x="5" y="0" width="2" height="3" fill="#d0d0d0" transform="rotate(0 6 6)"/><rect x="5" y="0" width="2" height="3" fill="#d0d0d0" transform="rotate(45 6 6)"/><rect x="5" y="0" width="2" height="3" fill="#d0d0d0" transform="rotate(90 6 6)"/><rect x="5" y="0" width="2" height="3" fill="#d0d0d0" transform="rotate(135 6 6)"/><rect x="5" y="0" width="2" height="3" fill="#d0d0d0" transform="rotate(180 6 6)"/><rect x="5" y="0" width="2" height="3" fill="#d0d0d0" transform="rotate(225 6 6)"/><rect x="5" y="0" width="2" height="3" fill="#d0d0d0" transform="rotate(270 6 6)"/><rect x="5" y="0" width="2" height="3" fill="#d0d0d0" transform="rotate(315 6 6)"/></svg><div style="left:204px;top:90px;width:1155px;height:2px;background:#0063b1;"></div><div style="left:204px;top:92px;width:1155px;height:21px;background:#252526;"></div><div style="left:204px;top:93px;width:376px;height:20px;background:#2a2a2c;border:1px solid #38383b;box-sizing:border-box;"></div><svg style="left:206px;top:95px" width="17" height="16"><path d="M3.5 5 V1.5 H16 V12.5 H10" fill="none" stroke="#b8b8b8" stroke-width="1.1"/><path d="M3.5 4.5 H16" stroke="#b8b8b8" stroke-width="1.1"/><path d="M5 7.2 L8.5 9.2 V13 L5 15 L1.5 13 V9.2 Z M1.5 9.2 L5 11 L8.5 9.2 M5 11 V15" fill="#2a2a2c" stroke="#9b6fd0" stroke-width="1.1"/></svg><div style="left:225px;top:94px;height:19px;line-height:19px;white-space:pre;font-size:12px;color:#dcdcdc;">Assembly-CSharp</div><svg style="left:570px;top:101px;" width="7" height="4" viewBox="0 0 7 4"><path d="M0 0 H7 L3.5 3.5 Z" fill="#8a8a8a"/></svg><div style="left:584px;top:93px;width:376px;height:20px;background:#2a2a2c;border:1px solid #38383b;box-sizing:border-box;"></div><svg style="left:586px;top:93px" width="18" height="18"><path d="M6.5 1.2 L10 4.7 L5 9.7 L1.5 6.2 Z M14 5.2 L16.5 7.7 L13.5 10.7 L11 8.2 Z M14 11.7 L16.5 14.2 L13.5 17.2 L11 14.7 Z M7.5 7.2 H11.5 M9.5 7.2 V13.7 H11.5" fill="none" stroke="#dcc488" stroke-width="1.1"/></svg><div style="left:605px;top:94px;height:19px;line-height:19px;white-space:pre;font-size:12px;color:#dcdcdc;">NewMonoInstaller</div><svg style="left:950px;top:101px;" width="7" height="4" viewBox="0 0 7 4"><path d="M0 0 H7 L3.5 3.5 Z" fill="#8a8a8a"/></svg><div style="left:963px;top:93px;width:376px;height:20px;background:#2a2a2c;border:1px solid #38383b;box-sizing:border-box;"></div><svg style="left:967px;top:95px" width="14" height="15"><path d="M7 1 L13 4 V11 L7 14 L1 11 V4 Z M1 4 L7 7 L13 4 M7 7 V14" fill="none" stroke="#b180d7" stroke-width="1.2"/></svg><div style="left:984px;top:94px;height:19px;line-height:19px;white-space:pre;font-size:12px;color:#dcdcdc;">InstallBindings()</div><svg style="left:1329px;top:101px;" width="7" height="4" viewBox="0 0 7 4"><path d="M0 0 H7 L3.5 3.5 Z" fill="#8a8a8a"/></svg><div style="left:1340px;top:92px;width:19px;height:21px;background:#1a1a1a;"></div><svg style="left:1343px;top:95px;" width="13" height="16" viewBox="0 0 13 16"><path d="M1 8.5 H12 M6.5 0.5 V6 M6.5 11 V16.5 M4 3 L6.5 0.5 L9 3 M4 14 L6.5 16.5 L9 14 M3 6.5 H10 M3 10.5 H10" fill="none" stroke="#e0e0e0" stroke-width="1.1"/></svg><div style="left:204px;top:113px;width:1136px;height:568px;background:#1e1e1e;"></div><div style="left:204px;top:113px;width:17px;height:568px;background:#2a2a2a;"></div><div style="left:203px;top:92px;width:1px;height:607px;background:#333337;"></div><div style="left:1340px;top:113px;width:20px;height:568px;background:#333337;"></div><svg style="left:1345px;top:119px;" width="10" height="6" viewBox="0 0 10 6"><path d="M0 6 L5 0.5 L10 6 Z" fill="#6a6a6a"/></svg><div style="left:1344px;top:131px;width:11px;height:206px;background:#5e5e5e;"></div><div style="left:1340px;top:236px;width:20px;height:2px;background:#d0d0d0;"></div><svg style="left:1345px;top:669px;" width="10" height="6" viewBox="0 0 10 6"><path d="M0 0 L5 5.5 L10 0 Z" fill="#9a9a9a"/></svg><div style="left:1360px;top:113px;width:6px;height:586px;background:#242426;"></div><div style="left:1359px;top:92px;width:7px;height:21px;background:#242426;"></div><div style="left:315px;top:412px;width:1025px;height:17px;border:2px solid #434343;box-sizing:border-box;background:#171717;"></div><div style="left:560.3px;top:395px;width:137.0px;height:17px;background:#113257;border:1px solid #3a5676;box-sizing:border-box;"></div><div style="left:537.5px;top:412px;width:137.0px;height:17px;background:#113257;border:1px solid #3a5676;box-sizing:border-box;"></div><div style="left:537.5px;top:463px;width:137.0px;height:17px;background:#113257;border:1px solid #3a5676;box-sizing:border-box;"></div><div style="left:537.5px;top:514px;width:137.0px;height:17px;background:#113257;border:1px solid #3a5676;box-sizing:border-box;"></div><div style="left:320px;top:196px;width:1px;height:485px;background:repeating-linear-gradient(to bottom,#5a5a5a 0 3px,transparent 3px 6px);"></div><div style="left:351px;top:243px;width:1px;height:438px;background:repeating-linear-gradient(to bottom,#5a5a5a 0 3px,transparent 3px 6px);"></div><div style="left:311px;top:168px;width:1px;height:513px;background:#a5a5a5;"></div><div style="left:306px;top:165px;width:9px;height:9px;background:#1e1e1e;border:1px solid #a5a5a5;box-sizing:border-box;"></div><div style="left:308px;top:169px;width:5px;height:1px;background:#d0d0d0;"></div><div style="left:306px;top:212px;width:9px;height:9px;background:#1e1e1e;border:1px solid #a5a5a5;box-sizing:border-box;"></div><div style="left:308px;top:216px;width:5px;height:1px;background:#d0d0d0;"></div><div style="left:306px;top:348px;width:9px;height:9px;background:#1e1e1e;border:1px solid #a5a5a5;box-sizing:border-box;"></div><div style="left:308px;top:352px;width:5px;height:1px;background:#d0d0d0;"></div><div class="ln" style="top:114px;color:#858585">1</div><div class="code" style="top:114px;"><span style="color:#569cd6">using</span><span style="color:#d4d4d4"> </span><span style="color:#bb80e6">Zenject</span><span style="color:#c8c8c8">;</span></div><div class="ln" style="top:131px;color:#858585">2</div><div class="ln" style="top:161px;color:#858585">3</div><div class="code" style="top:161px;"><span style="color:#569cd6">public</span><span style="color:#d4d4d4"> </span><span style="color:#569cd6">class</span><span style="color:#d4d4d4"> </span><span style="color:#bb80e6">NewMonoInstaller</span><span style="color:#d4d4d4"> </span><span style="color:#c8c8c8">:</span><span style="color:#d4d4d4"> </span><span style="color:#bb80e6">MonoInstaller</span></div><div class="ln" style="top:178px;color:#858585">4</div><div class="code" style="top:178px;"><span style="color:#c8c8c8">{</span></div><div class="ln" style="top:208px;color:#858585">5</div><div class="code" style="top:208px;"><span style="color:#d4d4d4">    </span><span style="color:#569cd6">public</span><span style="color:#d4d4d4"> </span><span style="color:#569cd6">override</span><span style="color:#d4d4d4"> </span><span style="color:#569cd6">void</span><span style="color:#d4d4d4"> </span><span style="color:#3fbf77">InstallBindings</span><span style="color:#c8c8c8">()</span></div><div class="ln" style="top:225px;color:#858585">6</div><div class="code" style="top:225px;"><span style="color:#d4d4d4">    </span><span style="color:#c8c8c8">{</span></div><div class="ln" style="top:242px;color:#858585">7</div><div class="code" style="top:242px;"><span style="color:#d4d4d4">        </span><span style="color:#4fb1c8">Container</span><span style="color:#c8c8c8">.</span><span style="color:#3fbf77">BindInterfacesAndSelfTo</span><span style="color:#c8c8c8">&lt;</span><span style="color:#bb80e6">CarController</span><span style="color:#c8c8c8">&gt;().</span><span style="color:#3fbf77">FromComponentInHierarchy</span><span style="color:#c8c8c8">().</span><span style="color:#3fbf77">AsSingle</span><span style="color:#c8c8c8">();</span><span style="color:#d4d4d4"> </span><span style="color:#57a64a">//what whould be the better way?</span></div><div class="ln" style="top:259px;color:#858585">8</div><div class="code" style="top:259px;"><span style="color:#d4d4d4">        </span><span style="color:#4fb1c8">Container</span><span style="color:#c8c8c8">.</span><span style="color:#3fbf77">Bind</span><span style="color:#c8c8c8">&lt;</span><span style="color:#bb80e6">ObstacleSpawner</span><span style="color:#c8c8c8">&gt;().</span><span style="color:#3fbf77">FromComponentInHierarchy</span><span style="color:#c8c8c8">().</span><span style="color:#3fbf77">AsSingle</span><span style="color:#c8c8c8">();</span></div><div class="ln" style="top:276px;color:#858585">9</div><div class="code" style="top:276px;"><span style="color:#d4d4d4">        </span><span style="color:#4fb1c8">Container</span><span style="color:#c8c8c8">.</span><span style="color:#3fbf77">Bind</span><span style="color:#c8c8c8">&lt;</span><span style="color:#bb80e6">MotionController</span><span style="color:#c8c8c8">&gt;().</span><span style="color:#3fbf77">FromComponentInHierarchy</span><span style="color:#c8c8c8">().</span><span style="color:#3fbf77">AsSingle</span><span style="color:#c8c8c8">();</span></div><div class="ln" style="top:293px;color:#858585">10</div><div class="code" style="top:293px;"><span style="color:#d4d4d4">        </span><span style="color:#4fb1c8">Container</span><span style="color:#c8c8c8">.</span><span style="color:#3fbf77">Bind</span><span style="color:#c8c8c8">&lt;</span><span style="color:#bb80e6">GameController</span><span style="color:#c8c8c8">&gt;().</span><span style="color:#3fbf77">FromComponentInHierarchy</span><span style="color:#c8c8c8">().</span><span style="color:#3fbf77">AsSingle</span><span style="color:#c8c8c8">();</span></div><div class="ln" style="top:310px;color:#858585">11</div><div class="code" style="top:310px;"><span style="color:#d4d4d4">        </span><span style="color:#4fb1c8">Container</span><span style="color:#c8c8c8">.</span><span style="color:#3fbf77">Bind</span><span style="color:#c8c8c8">&lt;</span><span style="color:#bb80e6">OutsideScreenObstacleCollector</span><span style="color:#c8c8c8">&gt;().</span><span style="color:#3fbf77">FromComponentInHierarchy</span><span style="color:#c8c8c8">().</span><span style="color:#3fbf77">AsSingle</span><span style="color:#c8c8c8">();</span></div><div class="ln" style="top:327px;color:#858585">12</div><div class="ln" style="top:344px;color:#858585">13</div><div class="code" style="top:344px;"><span style="color:#d4d4d4">        </span><span style="color:#9b9b9b">#region</span><span style="color:#d4d4d4"> </span><b style="color:#d4d4d4">Signal bind</b></div><div class="ln" style="top:361px;color:#858585">14</div><div class="code" style="top:361px;"><span style="color:#d4d4d4">        </span><span style="color:#bb80e6">SignalBusInstaller</span><span style="color:#c8c8c8">.</span><span style="color:#3fbf77">Install</span><span style="color:#c8c8c8">(</span><span style="color:#4fb1c8">Container</span><span style="color:#c8c8c8">);</span></div><div class="ln" style="top:378px;color:#858585">15</div><div class="ln" style="top:395px;color:#858585">16</div><div class="code" style="top:395px;"><span style="color:#d4d4d4">        </span><span style="color:#4fb1c8">Container</span><span style="color:#c8c8c8">.</span><span style="color:#3fbf77">DeclareSignal</span><span style="color:#c8c8c8">&lt;</span><span style="color:#bb80e6">MatchStartedSignal</span><span style="color:#c8c8c8">&gt;();</span></div><div class="ln" style="top:412px;color:#0a0a0a">17</div><div class="code" style="top:412px;"><span style="color:#d4d4d4">        </span><span style="color:#4fb1c8">Container</span><span style="color:#c8c8c8">.</span><span style="color:#3fbf77">BindSignal</span><span style="color:#c8c8c8">&lt;</span><span style="color:#bb80e6">MatchStartedSignal</span><span style="color:#c8c8c8">&gt;()</span></div><div class="ln" style="top:429px;color:#858585">18</div><div class="code" style="top:429px;"><span style="color:#d4d4d4">            </span><span style="color:#c8c8c8">.</span><span style="color:#3fbf77">ToMethod</span><span style="color:#c8c8c8">&lt;</span><span style="color:#bb80e6">CarController</span><span style="color:#c8c8c8">&gt;((</span><span style="color:#dcdcdc">refInstance</span><span style="color:#c8c8c8">, </span><span style="color:#dcdcdc">sigInstance</span><span style="color:#c8c8c8">) =&gt; </span><span style="color:#dcdcdc">refInstance</span><span style="color:#c8c8c8">.</span><span style="color:#3fbf77">OnRaceStart</span><span style="color:#c8c8c8">(</span><span style="color:#dcdcdc">sigInstance</span><span style="color:#c8c8c8">.</span><span style="color:#4fb1c8">carIndex</span><span style="color:#c8c8c8">))</span></div><div class="ln" style="top:446px;color:#858585">19</div><div class="code" style="top:446px;"><span style="color:#d4d4d4">            </span><span style="color:#c8c8c8">.</span><span style="color:#3fbf77">FromResolve</span><span style="color:#c8c8c8">();</span></div><div class="ln" style="top:463px;color:#858585">20</div><div class="code" style="top:463px;"><span style="color:#d4d4d4">        </span><span style="color:#4fb1c8">Container</span><span style="color:#c8c8c8">.</span><span style="color:#3fbf77">BindSignal</span><span style="color:#c8c8c8">&lt;</span><span style="color:#bb80e6">MatchStartedSignal</span><span style="color:#c8c8c8">&gt;()</span></div><div class="ln" style="top:480px;color:#858585">21</div><div class="code" style="top:480px;"><span style="color:#d4d4d4">            </span><span style="color:#c8c8c8">.</span><span style="color:#3fbf77">ToMethod</span><span style="color:#c8c8c8">&lt;</span><span style="color:#bb80e6">MotionController</span><span style="color:#c8c8c8">&gt;((</span><span style="color:#dcdcdc">refInstance</span><span style="color:#c8c8c8">, </span><span style="color:#dcdcdc">sigInstance</span><span style="color:#c8c8c8">) =&gt; </span><span style="color:#dcdcdc">refInstance</span><span style="color:#c8c8c8">.</span><span style="color:#3fbf77">OnRaceStart</span><span style="color:#c8c8c8">(</span><span style="color:#c8c8c8">))</span></div><div class="ln" style="top:497px;color:#858585">22</div><div class="code" style="top:497px;"><span style="color:#d4d4d4">            </span><span style="color:#c8c8c8">.</span><span style="color:#3fbf77">FromResolve</span><span style="color:#c8c8c8">();</span></div><div class="ln" style="top:514px;color:#858585">23</div><div class="code" style="top:514px;"><span style="color:#d4d4d4">        </span><span style="color:#4fb1c8">Container</span><span style="color:#c8c8c8">.</span><span style="color:#3fbf77">BindSignal</span><span style="color:#c8c8c8">&lt;</span><span style="color:#bb80e6">MatchStartedSignal</span><span style="color:#c8c8c8">&gt;()</span></div><div class="ln" style="top:531px;color:#858585">24</div><div class="code" style="top:531px;"><span style="color:#d4d4d4">            </span><span style="color:#c8c8c8">.</span><span style="color:#3fbf77">ToMethod</span><span style="color:#c8c8c8">&lt;</span><span style="color:#bb80e6">ObstacleSpawner</span><span style="color:#c8c8c8">&gt;((</span><span style="color:#dcdcdc">refInstance</span><span style="color:#c8c8c8">, </span><span style="color:#dcdcdc">sigInstance</span><span style="color:#c8c8c8">) =&gt; </span><span style="color:#dcdcdc">refInstance</span><span style="color:#c8c8c8">.</span><span style="color:#3fbf77">OnRaceStart</span><span style="color:#c8c8c8">(</span><span style="color:#c8c8c8">))</span></div><div class="ln" style="top:548px;color:#858585">25</div><div class="code" style="top:548px;"><span style="color:#d4d4d4">            </span><span style="color:#c8c8c8">.</span><span style="color:#3fbf77">FromResolve</span><span style="color:#c8c8c8">();</span></div><div class="ln" style="top:565px;color:#858585">26</div><div class="ln" style="top:582px;color:#858585">27</div><div class="code" style="top:582px;"><span style="color:#d4d4d4">        </span><span style="color:#4fb1c8">Container</span><span style="color:#c8c8c8">.</span><span style="color:#3fbf77">DeclareSignal</span><span style="color:#c8c8c8">&lt;</span><span style="color:#bb80e6">GameEndedSignal</span><span style="color:#c8c8c8">&gt;();</span></div><div class="ln" style="top:599px;color:#858585">28</div><div class="code" style="top:599px;"><span style="color:#d4d4d4">        </span><span style="color:#4fb1c8">Container</span><span style="color:#c8c8c8">.</span><span style="color:#3fbf77">BindSignal</span><span style="color:#c8c8c8">&lt;</span><span style="color:#bb80e6">GameEndedSignal</span><span style="color:#c8c8c8">&gt;()</span></div><div class="ln" style="top:616px;color:#858585">29</div><div class="code" style="top:616px;"><span style="color:#d4d4d4">            </span><span style="color:#c8c8c8">.</span><span style="color:#3fbf77">ToMethod</span><span style="color:#c8c8c8">&lt;</span><span style="color:#bb80e6">MotionController</span><span style="color:#c8c8c8">&gt;((</span><span style="color:#dcdcdc">refInstance</span><span style="color:#c8c8c8">, </span><span style="color:#dcdcdc">sigInstance</span><span style="color:#c8c8c8">) =&gt; </span><span style="color:#dcdcdc">refInstance</span><span style="color:#c8c8c8">.</span><span style="color:#3fbf77">OnRaceEnd</span><span style="color:#c8c8c8">(</span><span style="color:#c8c8c8">))</span></div><div class="ln" style="top:633px;color:#858585">30</div><div class="code" style="top:633px;"><span style="color:#d4d4d4">            </span><span style="color:#c8c8c8">.</span><span style="color:#3fbf77">FromResolve</span><span style="color:#c8c8c8">();</span></div><div class="ln" style="top:650px;color:#858585">31</div><div class="code" style="top:650px;"><span style="color:#d4d4d4">        </span><span style="color:#4fb1c8">Container</span><span style="color:#c8c8c8">.</span><span style="color:#3fbf77">BindSignal</span><span style="color:#c8c8c8">&lt;</span><span style="color:#bb80e6">GameEndedSignal</span><span style="color:#c8c8c8">&gt;()</span></div><div class="ln" style="top:667px;color:#858585">32</div><div class="code" style="top:667px;"><span style="color:#d4d4d4">            </span><span style="color:#c8c8c8">.</span><span style="color:#3fbf77">ToMethod</span><span style="color:#c8c8c8">&lt;</span><span style="color:#bb80e6">GameController</span><span style="color:#c8c8c8">&gt;((</span><span style="color:#dcdcdc">refInstance</span><span style="color:#c8c8c8">, </span><span style="color:#dcdcdc">sigInstance</span><span style="color:#c8c8c8">) =&gt; </span><span style="color:#dcdcdc">refInstance</span><span style="color:#c8c8c8">.</span><span style="color:#3fbf77">OnRaceEnd</span><span style="color:#c8c8c8">(</span><span style="color:#c8c8c8">))</span></div><div style="left:583.2px;top:413px;width:1px;height:16px;background:#a0a0a0;"></div><svg style="left:317px;top:150px;" width="10" height="10" viewBox="0 0 10 10"><path d="M5 0.8 L9 3 V7.3 L5 9.3 L1 7.3 V3 Z M1 3 L5 5 L9 3 M5 5 V9.3" fill="none" stroke="#8e6cae" stroke-width="0.9"/></svg><div style="left:330px;top:147px;height:14px;line-height:14px;white-space:pre;font-size:10.7px;color:#9a9a9a;">Unity Script (1 asset reference) | 0 references</div><div style="left:347.5px;top:194px;height:14px;line-height:14px;white-space:pre;font-size:10.7px;color:#9a9a9a;">10 references</div><svg style="left:224px;top:162px;" width="14" height="15" viewBox="0 0 14 15"><rect x="0.5" y="0.5" width="6" height="6" fill="#5fb9d8"/><rect x="0.5" y="8" width="6" height="6" fill="#5fb9d8"/><path d="M2 2 H5 M3.5 2 V5 M2 5 H5" stroke="#1e1e1e" stroke-width="0.9"/><circle cx="3.5" cy="11" r="1.5" fill="none" stroke="#1e1e1e" stroke-width="0.9"/><path d="M10.5 14 V2 M8.5 4 L10.5 1.5 L12.5 4" fill="none" stroke="#e8e8e8" stroke-width="1.1"/></svg><svg style="left:224px;top:209px;" width="14" height="15" viewBox="0 0 14 15"><rect x="0.5" y="0.5" width="6" height="6" fill="#5fb9d8"/><rect x="0.5" y="8" width="6" height="6" fill="#5fb9d8"/><path d="M2 2 H5 M3.5 2 V5 M2 5 H5" stroke="#1e1e1e" stroke-width="0.9"/><circle cx="3.5" cy="11" r="1.5" fill="none" stroke="#1e1e1e" stroke-width="0.9"/><path d="M10.5 14 V2 M8.5 4 L10.5 1.5 L12.5 4" fill="none" stroke="#e8e8e8" stroke-width="1.1"/></svg><svg style="left:280px;top:412px;" width="13" height="17" viewBox="0 0 13 17"><path d="M4.2 11.5 Q1 9 1 6.3 A5.5 5.5 0 0 1 12 6.3 Q12 9 8.8 11.5" fill="none" stroke="#d7b56d" stroke-width="1.1"/><circle cx="6.5" cy="6.4" r="2.1" fill="none" stroke="#d7b56d" stroke-width="1.1"/><path d="M6.5 8.5 V12" stroke="#d7b56d" stroke-width="1.1"/><rect x="4.3" y="12.6" width="4.4" height="3.3" fill="none" stroke="#c8c8c8" stroke-width="1.1"/></svg><div style="left:204px;top:681px;width:1156px;height:18px;background:#2d2d30;"></div><div style="left:205px;top:682px;width:58px;height:15px;background:#1f1f1f;"></div><div style="left:207px;top:682px;height:17px;line-height:17px;white-space:pre;font-size:11px;color:#dcdcdc;">100 %</div><svg style="left:253px;top:688px;" width="7" height="4" viewBox="0 0 7 4"><path d="M0 0 H7 L3.5 3.5 Z" fill="#c8c8c8"/></svg><svg style="left:266px;top:682px;" width="14" height="16" viewBox="0 0 14 16"><path d="M5 12.5 Q3 10 3.5 6.5 Q4.5 1.5 9 1.5 Q13 1.5 13.5 6 L13.5 8 L12.5 9 V11.5 H10.5 V14.5 H7" fill="none" stroke="#9b6fd0" stroke-width="1.3"/><path d="M1 11 L4.5 8 M1.5 13.5 L4 11.5 Q6 13 6.5 15" fill="none" stroke="#9b6fd0" stroke-width="1.6"/><path d="M7 5 Q9 3.5 11 5 Q11 7.5 8.5 8" fill="none" stroke="#9b6fd0" stroke-width="1"/></svg><div style="left:306.5px;top:684px;width:12px;height:12px;border-radius:50%;background:#6cb46c;"></div><svg style="left:308px;top:685.5px;" width="9" height="9" viewBox="0 0 9 9"><path d="M1.5 4.5 L3.8 6.8 L7.5 2.5" fill="none" stroke="#1e1e1e" stroke-width="1.5"/></svg><div style="left:323.5px;top:682px;height:17px;line-height:17px;white-space:pre;font-size:11.5px;color:#dcdcdc;">No issues found</div><div style="left:465px;top:684px;width:1px;height:12px;background:#808080;"></div><svg style="left:479px;top:682px;" width="16" height="16" viewBox="0 0 16 16"><path d="M1.5 10 L6 6.5 L9 10 L5.5 14.5 Z" fill="#8a7b55" stroke="#dcc488" stroke-width="1.1"/><path d="M3.5 12 L7 8.5" stroke="#dcc488" stroke-width="0.9"/><path d="M7.5 7.5 L13 2" stroke="#d8d8d8" stroke-width="2"/><path d="M2.5 1 V5 M0.5 3 H4.5 M5.5 0 V2.5 M4.2 1.2 H6.8" stroke="#5aa0e6" stroke-width="1"/></svg><svg style="left:497px;top:688px;" width="7" height="4" viewBox="0 0 7 4"><path d="M0 0 H7 L3.5 3.5 Z" fill="#c8c8c8"/></svg><svg style="left:533px;top:685px;" width="5" height="9" viewBox="0 0 5 9"><path d="M5 0 L0.5 4.5 L5 9 Z" fill="#6a6a6a"/></svg><div style="left:544px;top:684px;width:515px;height:10px;background:#5c5c5c;"></div><div style="left:1186px;top:682px;height:17px;line-height:17px;white-space:pre;font-size:11px;letter-spacing:-0.3px;color:#dcdcdc;">Ln: 17</div><div style="left:1234px;top:682px;height:17px;line-height:17px;white-space:pre;font-size:11px;letter-spacing:-0.3px;color:#dcdcdc;">Ch: 36</div><div style="left:1285px;top:682px;height:17px;line-height:17px;white-space:pre;font-size:11px;letter-spacing:-0.8px;color:#dcdcdc;">SPC</div><div style="left:1324px;top:682px;height:17px;line-height:17px;white-space:pre;font-size:11px;letter-spacing:-0.9px;color:#dcdcdc;">CRLF</div><div style="left:0px;top:705px;width:1366px;height:22px;background:#0063b1;"></div><svg style="left:3px;top:708px;" width="18" height="18" viewBox="0 0 18 18"><path d="M1.5 1.5 H17 V13.5 H14.5 L12 16 L9.5 13.5 H1.5 Z" fill="#1d6db3" stroke="#dcdcdc" stroke-width="1.1"/></svg><div style="left:28.5px;top:706px;height:22px;line-height:22px;white-space:pre;font-size:12px;color:#e8e8e8;">Ready</div><svg style="left:927px;top:711px;" width="14" height="13" viewBox="0 0 14 13"><path d="M3.5 12.5 V1 M0.5 3.5 L3.5 0.5 L6.5 3.5 M10.5 0.5 V12 M7.5 9.5 L10.5 12.5 L13.5 9.5" fill="none" stroke="#e8e8e8" stroke-width="1.2"/></svg><div style="left:947.5px;top:706px;height:22px;line-height:22px;white-space:pre;font-size:12px;color:#ececec;">0 / 0</div><svg style="left:978px;top:715px;" width="7" height="4" viewBox="0 0 7 4"><path d="M0 4 L3.5 0.5 L7 4 Z" fill="#fff"/></svg><svg style="left:1009px;top:711px;" width="13" height="13" viewBox="0 0 13 13"><path d="M1.5 11.5 L2 8.5 L9.5 1 L12 3.5 L4.5 11 Z" fill="none" stroke="#e8e8e8" stroke-width="1.1"/></svg><div style="left:1029px;top:706px;height:22px;line-height:22px;white-space:pre;font-size:12px;color:#ececec;">2</div><svg style="left:1058.5px;top:710px;" width="13" height="15" viewBox="0 0 13 15"><circle cx="3" cy="3" r="2.2" fill="none" stroke="#e8e8e8"/><circle cx="3" cy="12" r="2.2" fill="none" stroke="#e8e8e8"/><circle cx="10.5" cy="5" r="2.2" fill="none" stroke="#e8e8e8"/><path d="M3 5.2 V9.8 M10.5 7.2 Q10.5 10 4.5 11" fill="none" stroke="#e8e8e8"/></svg><div style="left:1079.8px;top:706px;height:22px;line-height:22px;white-space:pre;font-size:12px;color:#ececec;">myImplementation</div><svg style="left:1187px;top:715px;" width="7" height="4" viewBox="0 0 7 4"><path d="M0 4 L3.5 0.5 L7 4 Z" fill="#fff"/></svg><svg style="left:1223px;top:710px;" width="17" height="17" viewBox="0 0 17 17"><rect x="1" y="1.5" width="13" height="2" fill="none" stroke="#e8e8e8"/><path d="M2 3.5 V13 H8 M13 3.5 V8" fill="none" stroke="#e8e8e8"/><path d="M5 6 V11 M8 6 V9" stroke="#e8e8e8"/><circle cx="11.5" cy="12.5" r="3.5" fill="#fff"/><path d="M11.5 14.5 V10.8 M10 12.2 L11.5 10.8 L13 12.2" stroke="#0063b1" stroke-width="1"/></svg><div style="left:1245px;top:706px;height:22px;line-height:22px;white-space:pre;font-size:12px;color:#ececec;">Extenject</div><svg style="left:1300px;top:715px;" width="7" height="4" viewBox="0 0 7 4"><path d="M0 4 L3.5 0.5 L7 4 Z" fill="#fff"/></svg><svg style="left:1328px;top:709px;" width="14" height="16" viewBox="0 0 14 16"><path d="M2 12 H12 L10.5 10 V6 Q10.5 2 7 2 Q3.5 2 3.5 6 V10 Z M5.5 13.5 Q7 15.5 8.5 13.5" fill="none" stroke="#e8e8e8" stroke-width="1.1"/></svg><div style="left:1337px;top:714px;width:11px;height:11px;border-radius:50%;background:#c50f1f;color:#fff;font-size:10px;line-height:11px;text-align:center;font-weight:bold;">1</div><div style="left:1073px;top:650px;height:24px;line-height:24px;white-space:pre;font-size:19.9px;color:rgba(200,200,200,0.55);">Activate Windows</div><div style="left:1073px;top:675px;height:20px;line-height:20px;white-space:pre;font-size:15px;color:rgba(200,200,200,0.55);">Go to Settings to activate Windows.</div>
</body></html>
